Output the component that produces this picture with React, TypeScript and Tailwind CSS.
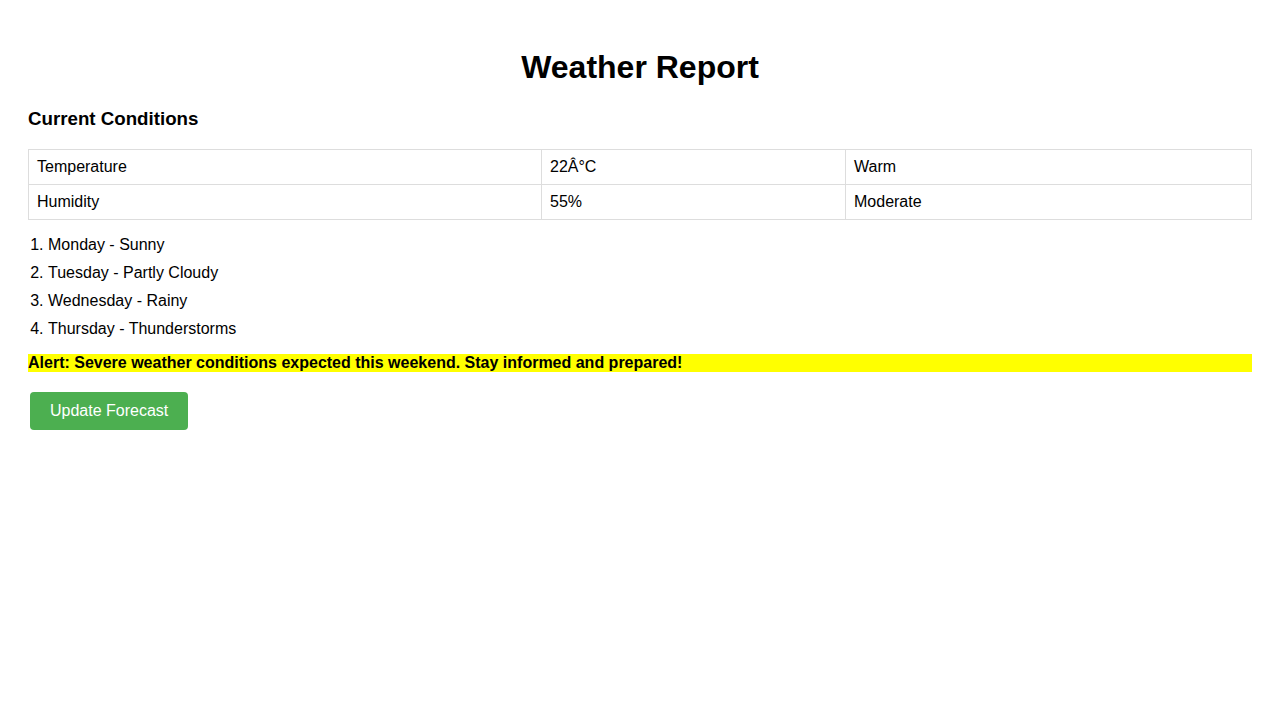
import React from "react";

const rows = [
  { label: "Temperature", value: "22Â°C", note: "Warm" },
  { label: "Humidity", value: "55%", note: "Moderate" },
];

const forecast = [
  "Monday - Sunny",
  "Tuesday - Partly Cloudy",
  "Wednesday - Rainy",
  "Thursday - Thunderstorms",
];

const App = () => {
  return (
    <div className="min-h-screen bg-white px-[28px] pt-[49px] font-['Liberation_Sans',Arial,sans-serif] text-black">
      <h1 className="text-center text-[32px] font-bold leading-[37px]">
        Weather Report
      </h1>

      {/* Current conditions */}
      <h3 className="mt-[22px] text-[18.72px] font-bold leading-[21px]">
        Current Conditions
      </h3>
      <table className="mt-[20px] w-full border-collapse text-[16px]">
        <tbody>
          {rows.map((row) => (
            <tr key={row.label}>
              <td className="w-[513px] border border-[#ddd] p-2 leading-[18px]">
                {row.label}
              </td>
              <td className="w-[304px] border border-[#ddd] p-2 leading-[18px]">
                {row.value}
              </td>
              <td className="border border-[#ddd] p-2 leading-[18px]">
                {row.note}
              </td>
            </tr>
          ))}
        </tbody>
      </table>

      {/* Forecast */}
      <ol className="mt-[16px] list-decimal space-y-[10px] pl-[20px] text-[16px] leading-[18px]">
        {forecast.map((day) => (
          <li key={day}>{day}</li>
        ))}
      </ol>

      <p className="mt-[16px] bg-[#ffff00] text-[16px] font-bold leading-[18px]">
        Alert: Severe weather conditions expected this weekend. Stay informed
        and prepared!
      </p>

      <button className="ml-[2px] mt-[20px] rounded-[4px] bg-[#4caf50] px-[20px] py-[10px] text-[16px] leading-[18px] text-white">
        Update Forecast
      </button>
    </div>
  );
};

export default App;
